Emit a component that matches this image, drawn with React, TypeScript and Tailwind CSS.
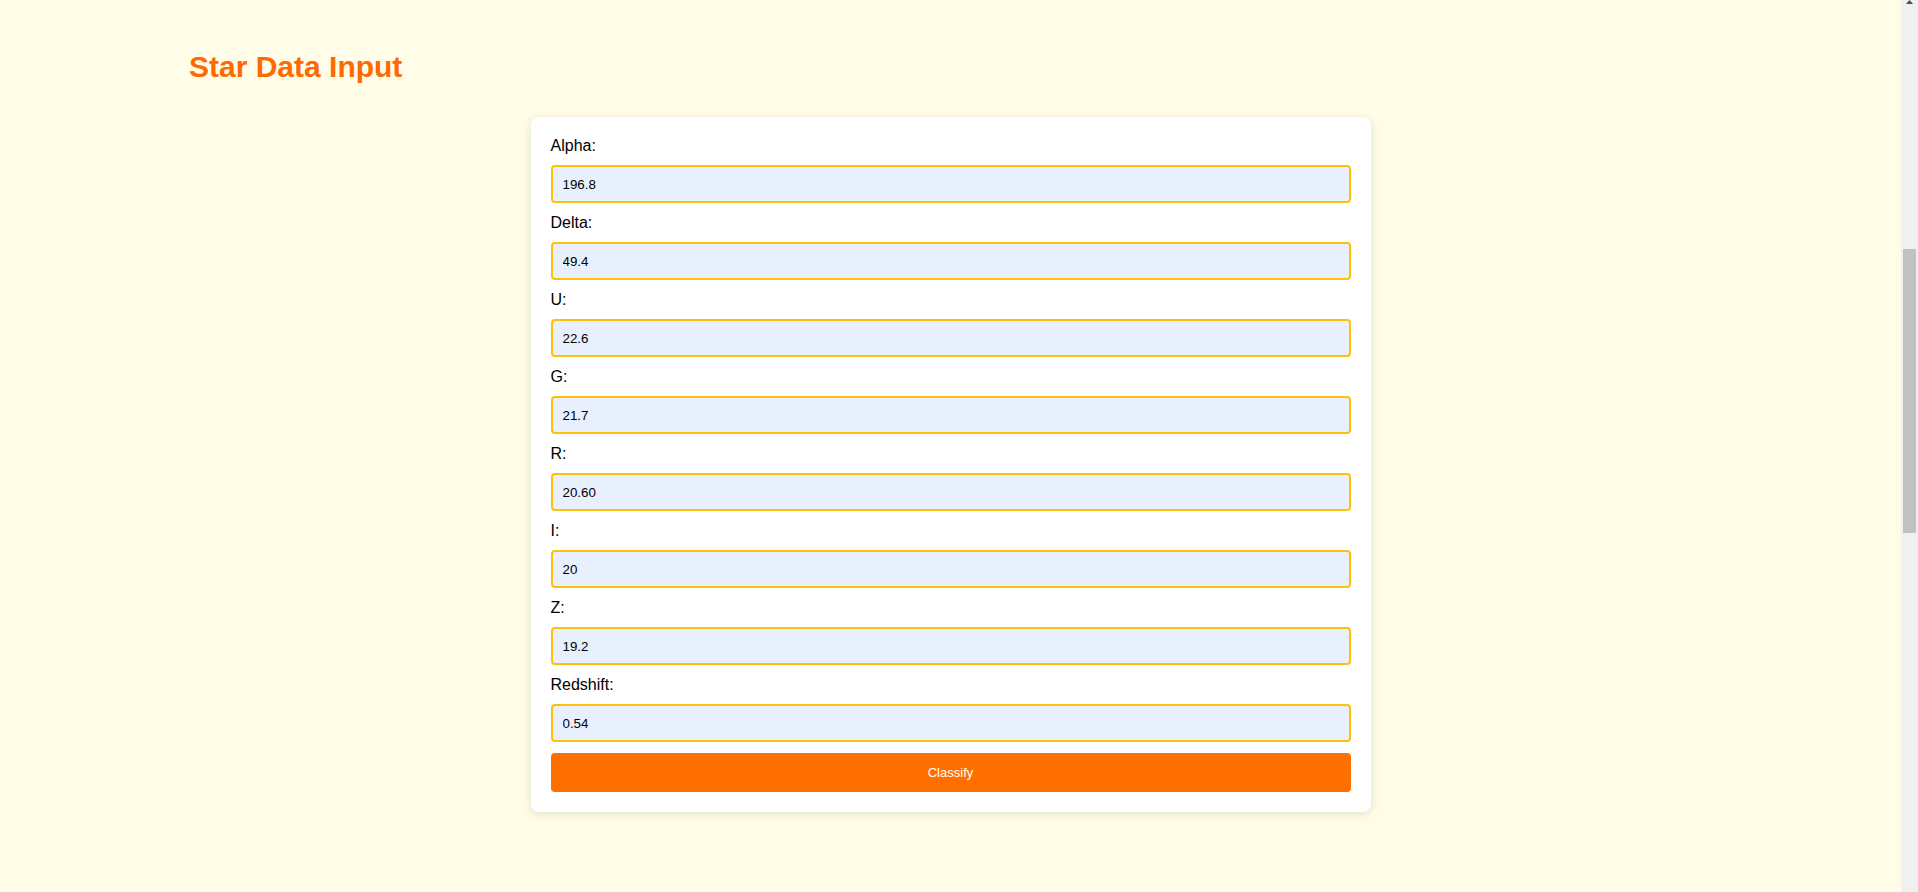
import React from "react";

const fields: { label: string; value: string }[] = [
  { label: "Alpha:", value: "196.8" },
  { label: "Delta:", value: "49.4" },
  { label: "U:", value: "22.6" },
  { label: "G:", value: "21.7" },
  { label: "R:", value: "20.60" },
  { label: "I:", value: "20" },
  { label: "Z:", value: "19.2" },
  { label: "Redshift:", value: "0.54" },
];

export default function App() {
  return (
    <div
      className="flex h-[892px] w-full overflow-hidden bg-[#fffde7]"
      style={{ fontFamily: '"Liberation Sans", Arial, sans-serif' }}
    >
      <main className="flex-1 flex flex-col">
        <div className="pl-[189px] pt-[50px]">
          <h1 className="text-[30px] font-bold leading-[34px] text-[#ff6a00]">Star Data Input</h1>
        </div>
        <div className="mt-[33px] flex justify-center">
          <form
            className="w-[840px] rounded-[8px] bg-white px-[20px] pt-[20px] pb-[20px] shadow-[0_2px_10px_rgba(0,0,0,0.12)]"
            onSubmit={(e) => e.preventDefault()}
          >
            {fields.map((f) => (
              <div key={f.label} className="flex flex-col">
                <label className="mb-[10px] block text-[16px] leading-[18px] text-black">{f.label}</label>
                <input
                  type="text"
                  defaultValue={f.value}
                  className="mb-[11px] h-[38px] w-full rounded-[4px] border-2 border-[#ffc107] bg-[#e8f0fe] px-[10px] text-[13.33px] text-black outline-none"
                />
              </div>
            ))}
            <button
              type="submit"
              className="flex h-[39px] w-full items-center justify-center rounded-[4px] bg-[#ff6f00] text-[13px] font-medium text-white"
            >
              Classify
            </button>
          </form>
        </div>
      </main>
      <aside className="flex w-[17px] flex-col items-center bg-[#f0f0f0]">
        <div className="flex h-[17px] w-full items-start justify-center">
          <svg width="9" height="6" viewBox="0 0 9 6">
            <path d="M4.5 0 L8 4 L1 4 Z" fill="#505050" />
          </svg>
        </div>
        <div className="mt-[232px] h-[284px] w-[13px] bg-[#c1c1c1]" />
      </aside>
    </div>
  );
}
